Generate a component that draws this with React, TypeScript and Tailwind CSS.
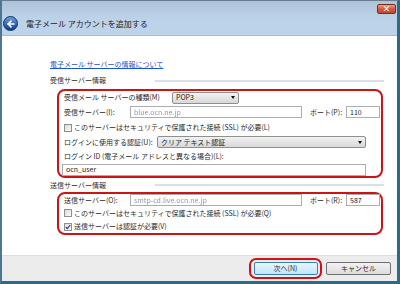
import { ArrowLeft } from 'lucide-react';

const FONT = { fontFamily: '"Noto Sans CJK JP", "Noto Sans", sans-serif' };

function Input({ value, className, blur }: { value: string; className: string; blur?: boolean }) {
  return (
    <div className={`shrink-0 h-[12px] border border-[#abadb3] bg-white flex items-center px-[3px] ${className}`}>
      <span className={blur ? 'text-[#8c98ab] blur-[0.6px]' : 'text-[#222]'}>{value}</span>
    </div>
  );
}

function Select({ value, className }: { value: string; className: string }) {
  return (
    <div className={`shrink-0 h-[12px] border border-[#8e8f8f] rounded-[2px] bg-gradient-to-b from-[#f2f2f2] to-[#d8d8d8] flex items-center justify-between px-[3px] ${className}`}>
      <span className="text-[#222]">{value}</span>
      <span className="w-0 h-0 border-l-[2.5px] border-r-[2.5px] border-t-[3px] border-l-transparent border-r-transparent border-t-[#111]" />
    </div>
  );
}

function Check({ checked }: { checked?: boolean }) {
  return (
    <div className="shrink-0 w-[8px] h-[8px] border border-[#8f8f8f] bg-gradient-to-br from-[#dcdcdc] to-[#fafafa] flex items-center justify-center mr-[2px]">
      {checked && (
        <svg width="6" height="6" viewBox="0 0 6 6">
          <path d="M0.8 3.2 L2.3 4.7 L5.2 1" stroke="#2a3f7a" strokeWidth="1.2" fill="none" />
        </svg>
      )}
    </div>
  );
}

function Heading({ text, className }: { text: string; className: string }) {
  return (
    <div className={`flex items-center ${className}`}>
      <span className="w-[105px] shrink-0">{text}</span>
      <div className="flex-1 h-[2px] bg-[#dcdfe3] mr-[13px]" />
    </div>
  );
}

export default function App() {
  return (
    <div className="w-[400px] h-[284px] flex flex-col overflow-hidden whitespace-nowrap border-t border-t-[#6b7d8f] border-l-2 border-l-[#4f7590] border-r-[3px] border-r-[#2c6b86] border-b-[3px] border-b-[#2c6b86] text-[7px] leading-none text-[#2a2a2a]" style={FONT}>
      {/* Title bar */}
      <div className="h-[35px] flex flex-col bg-gradient-to-b from-[#aec3d8] via-[#bcd2e8] to-[#bdd4ea] border-b border-b-[#a3bcd4]">
        <div className="h-[15px] flex justify-end items-start pt-[3px] pr-[1px]">
          <div className="w-[19px] h-[10px] rounded-[2px] border border-[#7a2b1e] bg-gradient-to-b from-[#e9a08e] via-[#cf5a3f] to-[#c24a2e] flex items-center justify-center">
            <span className="text-white text-[8px] font-bold leading-none">×</span>
          </div>
        </div>
        <div className="flex items-center pl-[1px] gap-[8px]">
          <div className="w-[15px] h-[15px] rounded-full bg-gradient-to-b from-[#6a9ee0] to-[#123d8a] border border-[#0c2f6a] flex items-center justify-center">
            <ArrowLeft className="w-[10px] h-[10px] text-white" strokeWidth={4} />
          </div>
          <span className="text-[8px] text-[#1a1a1a]">電子メール アカウントを追加する</span>
        </div>
      </div>

      {/* Content */}
      <div className="flex-1 bg-white flex flex-col pl-[48px] pt-[22px]">
        <div className="h-[12px] flex items-center">
          <span className="text-[#1c55c8] underline">電子メール サーバーの情報について</span>
        </div>
        <Heading text="受信サーバー情報" className="h-[13px] mt-[4px]" />

        <div className="ml-[7px] w-[326px] mt-[2px] border-2 border-[#cc1414] rounded-[8px] flex flex-col pl-[5px]">
          <div className="h-[13px] flex items-center">
            <span className="w-[108px] shrink-0">受信メール サーバーの種類(M)</span>
            <Select value="POP3" className="w-[67px]" />
          </div>
          <div className="h-[16px] flex items-center">
            <span className="w-[66px] shrink-0">受信サーバー(I):</span>
            <Input value="blue.ocn.ne.jp" className="w-[172px]" blur />
            <span className="ml-[8px] w-[36px] shrink-0">ポート(P):</span>
            <Input value="110" className="w-[34px]" />
          </div>
          <div className="h-[15px] flex items-center">
            <Check />
            <span>このサーバーはセキュリティで保護された接続 (SSL) が必要(L)</span>
          </div>
          <div className="h-[14px] flex items-center">
            <span className="w-[93px] shrink-0">ログインに使用する認証(U):</span>
            <Select value="クリア テキスト認証" className="w-[209px]" />
          </div>
          <div className="h-[14px] flex items-center">
            <span>ログイン ID (電子メール アドレスと異なる場合)(L):</span>
          </div>
          <div className="h-[13px] flex items-center -ml-[2px]">
            <Input value="ocn_user" className="w-[304px]" />
          </div>
        </div>

        <Heading text="送信サーバー情報" className="h-[14px]" />

        <div className="ml-[7px] w-[326px] border-2 border-[#cc1414] rounded-[8px] flex flex-col pl-[5px]">
          <div className="h-[12px] flex items-center">
            <span className="w-[66px] shrink-0">送信サーバー(O):</span>
            <Input value="smtp-cd.live.ocn.ne.jp" className="w-[172px]" blur />
            <span className="ml-[8px] w-[36px] shrink-0">ポート(R):</span>
            <Input value="587" className="w-[34px]" />
          </div>
          <div className="h-[14px] flex items-center">
            <Check />
            <span>このサーバーはセキュリティで保護された接続 (SSL) が必要(Q)</span>
          </div>
          <div className="h-[13px] flex items-center">
            <Check checked />
            <span>送信サーバーは認証が必要(V)</span>
          </div>
        </div>
      </div>

      {/* Footer */}
      <div className="h-[26px] bg-[#ececec] border-t border-t-[#dedede] flex items-center justify-end pr-[6px] gap-[4px]">
        <div className="w-[73px] h-[21px] border-2 border-[#cc1414] rounded-[7px] flex items-center justify-center">
          <div className="w-[64px] h-[13px] rounded-[2px] border border-[#3c7fb1] bg-gradient-to-b from-[#eaf6fd] to-[#bee6fd] flex items-center justify-center">
            <span>次へ(N)</span>
          </div>
        </div>
        <div className="w-[65px] h-[13px] rounded-[2px] border border-[#707070] bg-gradient-to-b from-[#f2f2f2] to-[#dcdcdc] flex items-center justify-center">
          <span>キャンセル</span>
        </div>
      </div>
    </div>
  );
}
